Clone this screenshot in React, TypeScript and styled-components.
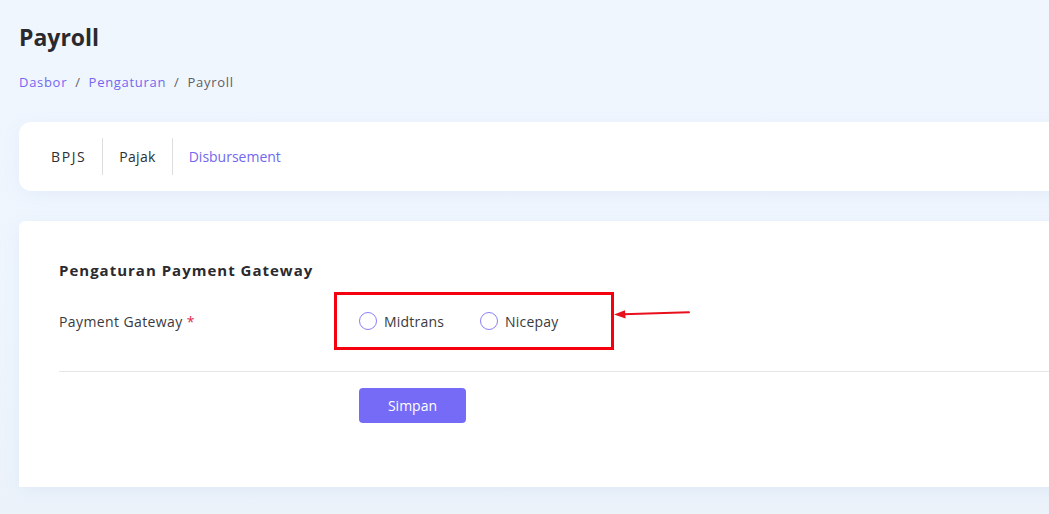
import styled, { createGlobalStyle } from 'styled-components'

const GlobalStyle = createGlobalStyle`
	html, body {
		margin: 0;
		padding: 0;
		background: #eef5fd;
		overflow: hidden;
	}
	body {
		font-family: 'Open Sans', 'Noto Sans', sans-serif;
		color: #2f2f33;
	}
`

const Page = styled.div`
	width: 1100px;
	min-height: 514px;
	padding: 21px 0 27px 19px;
	box-sizing: border-box;
	background: linear-gradient(180deg, #f0f6fe 0%, #eef5fd 60%, #ebf2fa 100%);
`

const Title = styled.h1`
	margin: 0;
	font-size: 23px;
	line-height: 32px;
	font-weight: 700;
	color: #2a2a2e;
`

const Crumbs = styled.nav`
	display: flex;
	gap: 8px;
	margin-top: 20px;
	font-size: 13px;
	line-height: 18px;
	letter-spacing: 0.7px;
	color: #5e5e66;
`

const CrumbLink = styled.a`
	color: #7367f0;
	text-decoration: none;
`

const Card = styled.section`
	background: #fff;
	border-radius: 12px 0 0 12px;
	box-shadow: 0 4px 18px rgba(120, 150, 200, 0.08);
`

const TabCard = styled(Card)`
	margin-top: 31px;
	display: flex;
	padding: 16px;
`

const Tab = styled.div<{ $active?: boolean }>`
	display: flex;
	align-items: center;
	height: 37px;
	padding: 0 16px;
	font-size: 14px;
	color: ${(p) => (p.$active ? '#7367f0' : '#2f2f33')};
	& + & {
		border-left: 1px solid #dedede;
	}
	&:first-child {
		letter-spacing: 1.6px;
	}
	&:nth-child(2) {
		letter-spacing: 0.3px;
	}
`

const FormCard = styled(Card)`
	margin-top: 30px;
	border-radius: 6px 0 0 0;
	padding: 39px 0 64px 40px;
`

const SectionTitle = styled.h2`
	margin: 0;
	font-size: 15px;
	line-height: 20px;
	font-weight: 700;
	letter-spacing: 1px;
	color: #2a2a2e;
`

const FieldRow = styled.div`
	display: grid;
	grid-template-columns: 275px auto;
	align-items: center;
	margin-top: 12px;
`

const Label = styled.label`
	font-size: 14px;
	letter-spacing: 0.4px;
	color: #3a3a40;
	span {
		color: #e0284f;
	}
`

const RadioGroup = styled.div`
	position: relative;
	display: flex;
	align-items: center;
	gap: 36px;
	width: 280px;
	height: 58px;
	box-sizing: border-box;
	padding-left: 22px;
	border: 3px solid #f5000f;
`

const RadioOption = styled.label`
	display: flex;
	align-items: center;
	gap: 7px;
	font-size: 14px;
	letter-spacing: 0.2px;
	color: #3a3a40;
`

const RadioCircle = styled.span`
	width: 18px;
	height: 18px;
	box-sizing: border-box;
	border-radius: 50%;
	border: 1.5px solid #8a80f3;
`

const Pointer = styled.svg`
	position: absolute;
	left: calc(100% + 2px);
	top: 10px;
`

const Divider = styled.hr`
	margin: 21px 0 0;
	border: 0;
	border-top: 1px solid #e6e6e6;
`

const Actions = styled.div`
	padding: 16px 0 0 300px;
`

const SaveButton = styled.button`
	width: 107px;
	height: 35px;
	border: 0;
	border-radius: 4px;
	background: #756bf6;
	color: #fff;
	font-family: inherit;
	font-size: 14px;
	font-weight: 500;
`

const App = () => {
	return (
		<Page>
			<GlobalStyle />
			<Title>Payroll</Title>
			<Crumbs>
				<CrumbLink>Dasbor</CrumbLink>
				<span>/</span>
				<CrumbLink>Pengaturan</CrumbLink>
				<span>/</span>
				<span>Payroll</span>
			</Crumbs>
			<TabCard>
				<Tab>BPJS</Tab>
				<Tab>Pajak</Tab>
				<Tab $active>Disbursement</Tab>
			</TabCard>
			<FormCard>
				<SectionTitle>Pengaturan Payment Gateway</SectionTitle>
				<FieldRow>
					<Label>
						Payment Gateway <span>*</span>
					</Label>
					<RadioGroup>
						<RadioOption>
							<RadioCircle />
							Midtrans
						</RadioOption>
						<RadioOption>
							<RadioCircle />
							Nicepay
						</RadioOption>
						<Pointer width='80' height='14' viewBox='0 0 80 14'>
							<path d='M76 7.2 L10 9.2' stroke='#e8101c' strokeWidth='2' strokeLinecap='round' />
							<path d='M1 9.5 L12 5.2 L12.6 13.4 Z' fill='#e8101c' />
						</Pointer>
					</RadioGroup>
				</FieldRow>
				<Divider />
				<Actions>
					<SaveButton>Simpan</SaveButton>
				</Actions>
			</FormCard>
		</Page>
	)
}

export default App
